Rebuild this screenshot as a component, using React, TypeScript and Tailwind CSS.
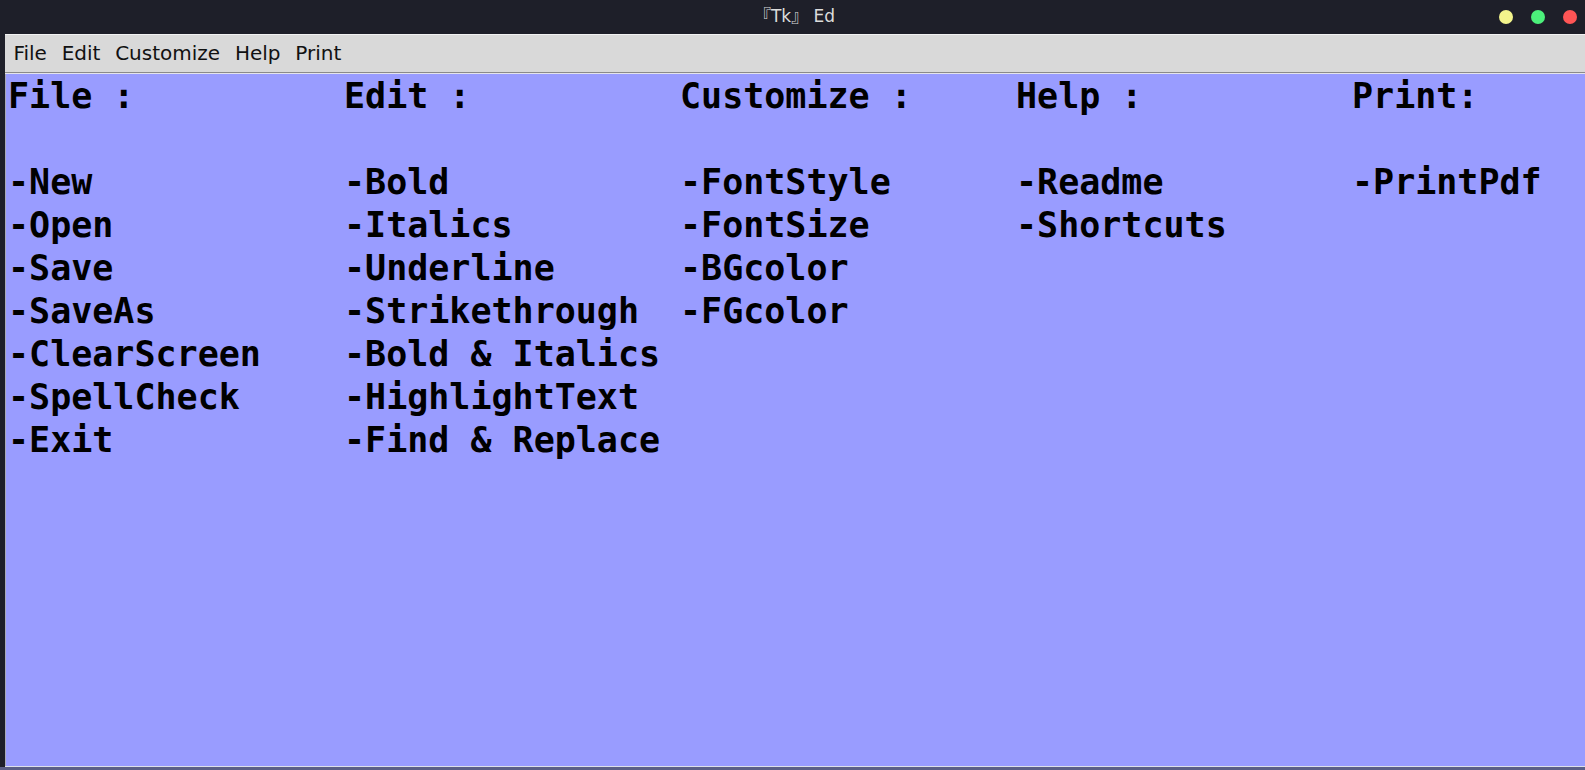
import React from "react";

const cols: string[][] = [
  ["File :", "", "-New", "-Open", "-Save", "-SaveAs", "-ClearScreen", "-SpellCheck", "-Exit"],
  ["Edit :", "", "-Bold", "-Italics", "-Underline", "-Strikethrough", "-Bold & Italics", "-HighlightText", "-Find & Replace"],
  ["Customize :", "", "-FontStyle", "-FontSize", "-BGcolor", "-FGcolor"],
  ["Help :", "", "-Readme", "-Shortcuts"],
  ["Print:", "", "-PrintPdf"],
];

export default function App() {
  return (
    <div className="w-[1585px] h-[770px] bg-[#1e1f29] flex flex-col overflow-hidden">
      {/* title bar */}
      <div className="h-[34px] shrink-0 grid grid-cols-[1fr_auto_1fr] items-center">
        <div />
        <div
          className="text-[17px] text-[#dcdcdc] pl-[4px]"
          style={{ fontFamily: '"DejaVu Sans", "Noto Sans CJK JP", sans-serif' }}
        >
          『Tk』 Ed
        </div>
        <div className="flex justify-end items-center gap-[18px] pr-[8px]">
          <span className="w-[14px] h-[14px] rounded-full bg-[#f3f48c]" />
          <span className="w-[14px] h-[14px] rounded-full bg-[#4cf07b]" />
          <span className="w-[14px] h-[14px] rounded-full bg-[#ff5555]" />
        </div>
      </div>
      <div className="flex flex-1 min-h-0">
        <div className="w-[5px] shrink-0 bg-[#1e1f29]" />
        <div className="flex-1 flex flex-col min-w-0">
          <div className="h-px bg-[#f2f2f2]" />
          <div
            className="h-[37px] bg-[#d9d9d9] flex items-center pl-[1px] pb-[2px] text-[20px] text-[#111]"
            style={{ fontFamily: '"DejaVu Sans", sans-serif' }}
          >
            {["File", "Edit", "Customize", "Help", "Print"].map((m) => (
              <span key={m} className="px-[7.4px]">
                {m}
              </span>
            ))}
          </div>
          <div className="h-px bg-[#8a8a8a]" />
          <div className="h-px bg-[#e4e4ec]" />
          <div className="flex-1 bg-[#999cff] border-l border-[#a9a9b6] flex pl-[2px] pt-[1px]">
            {cols.map((c, i) => (
              <div
                key={i}
                className="w-[336px] shrink-0 flex flex-col font-bold text-[35px] leading-[43px] text-black whitespace-pre"
                style={{ fontFamily: '"DejaVu Sans Mono", monospace' }}
              >
                {c.map((t, j) => (
                  <div key={j} className="h-[43px]">
                    {t}
                  </div>
                ))}
              </div>
            ))}
          </div>
          <div className="h-px bg-[#dde0ea]" />
        </div>
      </div>
      <div className="h-[3px] shrink-0 bg-[#5b5f86]" />
    </div>
  );
}
